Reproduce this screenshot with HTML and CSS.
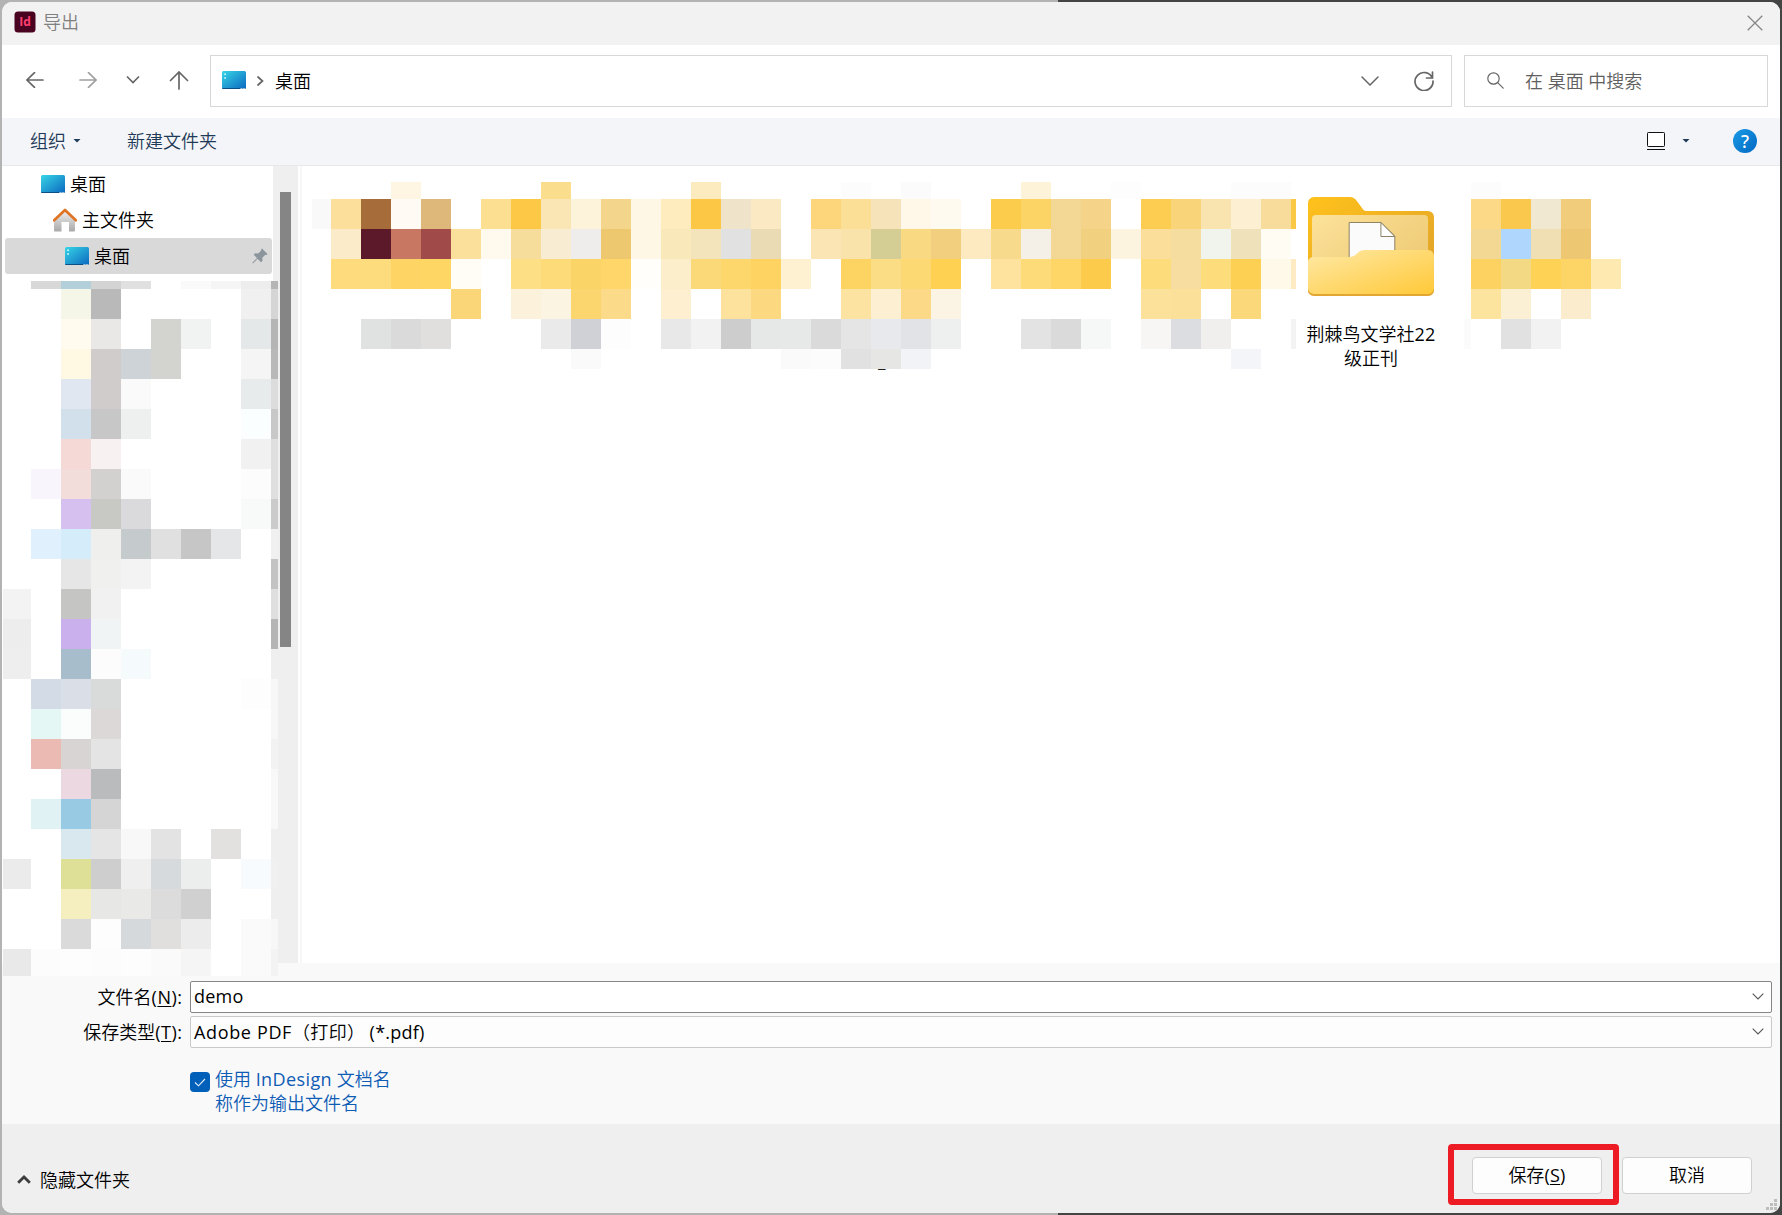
FILE: index.html
```html
<!DOCTYPE html>
<html lang="zh-CN">
<head>
<meta charset="utf-8">
<title>导出</title>
<link rel="stylesheet" href="styles.css">
</head>
<body>
<svg width="0" height="0" class="defs" aria-hidden="true">
  <defs>
    <linearGradient id="desk" x1="0" y1="0" x2="1" y2="1"><stop offset="0" stop-color="#37d5e6"/><stop offset="1" stop-color="#0b68c0"/></linearGradient>
    <symbol id="desktop" viewBox="0 0 24 18">
      <rect width="24" height="18" rx="1.5" fill="url(#desk)"/>
      <path d="M0 17h24a1.400 1.400 0 0 1-1.400 1H1.400A1.400 1.400 0 0 1 0 17z" fill="#0a4f86"/>
      <path d="M18.500 17.500h1.200M20.500 17.500h1.200M22.300 17.500h1" stroke="#d5efff" stroke-width="1"/>
    </symbol>
    <symbol id="desktop-dots" viewBox="0 0 24 18">
      <use href="#desktop" width="24" height="18"/>
      <path d="M2.200 3.200h1.800M2.200 7h1.800" stroke="#c9fafd" stroke-width="1.600"/>
    </symbol>
  </defs>
</svg>
<div class="window">
  <header class="titlebar">
    <svg class="app-icon" width="22" height="22" viewBox="0 0 22 22"><rect x=".5" y=".5" width="21" height="21" rx="3.500" fill="#49021f"/><text x="11" y="14.500" text-anchor="middle">Id</text></svg>
    <span class="title">导出</span>
    <svg class="close" width="16" height="16" viewBox="0 0 16 16"><path d="M.7.7l14.600 14.600M15.300.7L.7 15.300" stroke="#868686" stroke-width="1.300"/></svg>
  </header>

  <nav class="nav">
    <svg class="back" width="18" height="16" viewBox="0 0 18 16"><path d="M17 8H1M8.500.7L1 8l7.500 7.300"/></svg>
    <svg class="forward" width="18" height="16" viewBox="0 0 18 16"><path d="M1 8h16M9.500.7L17 8l-7.500 7.300"/></svg>
    <svg class="recent" width="14" height="8" viewBox="0 0 14 8"><path d="M1.500 1l5.500 5.500L12.500 1"/></svg>
    <svg class="up" width="20" height="19" viewBox="0 0 20 19"><path d="M10 18V1M1.500 9.500L10 1l8.500 8.500"/></svg>
    <div class="address">
      <svg width="24" height="18"><use href="#desktop-dots"/></svg>
      <svg class="crumb" width="7" height="10" viewBox="0 0 7 10"><path d="M1 1l4.500 4L1 9"/></svg>
      <span>桌面</span>
      <svg class="history" width="18" height="10" viewBox="0 0 18 10"><path d="M1 1l8 8 8-8"/></svg>
      <svg class="refresh" width="20" height="20" viewBox="0 0 20 20"><path d="M18.300 7A9 9 0 1 0 19 10M18.500 1v6h-6"/></svg>
    </div>
    <div class="search">
      <svg width="17" height="17" viewBox="0 0 17 17"><circle cx="6.500" cy="6.500" r="5.700"/><path d="M10.700 10.700l5.500 5.500"/></svg>
      <span>在 桌面 中搜索</span>
    </div>
  </nav>

  <div class="toolbar">
    <span>组织</span><i class="tri"></i>
    <span class="new-folder">新建文件夹</span>
    <svg class="view" width="18" height="18" viewBox="0 0 18 18"><rect x=".5" y=".5" width="17" height="14" rx=".8" fill="#fff" stroke="#111"/><path d="M0 17.500h18" stroke="#111"/></svg>
    <i class="tri tri-view"></i>
    <span class="help">?</span>
  </div>

  <main class="body">
    <aside class="tree">
      <div class="node"><svg width="24" height="18"><use href="#desktop"/></svg>桌面</div>
      <div class="node home">
        <svg width="24" height="24" viewBox="0 0 24 24">
          <defs><linearGradient id="wall" x1="0" y1="0" x2="0" y2="1"><stop offset="0" stop-color="#eee"/><stop offset="1" stop-color="#a9a9a9"/></linearGradient></defs>
          <path d="M12 3l10 9v10.500a1 1 0 0 1-1 1h-5V14H8.500v9.500H2a1 1 0 0 1-1-1V12z" fill="url(#wall)"/>
          <path d="M1.200 12.300L12 2l10.800 10.300" fill="none" stroke="#df7424" stroke-width="2.700" stroke-linecap="round" stroke-linejoin="round"/>
        </svg>主文件夹</div>
      <div class="node selected"><svg width="24" height="18"><use href="#desktop-dots"/></svg>桌面
        <svg class="pin" width="16" height="16" viewBox="0 0 16 16"><path d="M10 .5L15.500 6l-1 1-1.200-.2-3 3 .2 3-1.500 1.500-3.500-3.500L1 15.500l-.7-.7L5 10 1.700 6.700l1.500-1.500 3 .3 3-3L9 1.500z" fill="#8a959c"/></svg>
      </div>
    </aside>
    <div class="scrollbar"><div class="thumb"></div></div>
    <div class="splitter"></div>
    <section class="files">
      <svg class="mosaic" id="files-a" width="984" height="187"></svg>
      <figure class="folder">
        <svg width="126" height="99" viewBox="0 0 127 99" preserveAspectRatio="none">
          <defs>
            <linearGradient id="fb" x1="0" y1="0" x2="1" y2="1"><stop offset="0" stop-color="#ffc21b"/><stop offset="1" stop-color="#dfa12a"/></linearGradient>
            <linearGradient id="fi" x1="0" y1="0" x2="1" y2=".6"><stop offset="0" stop-color="#fce29a"/><stop offset="1" stop-color="#efcc78"/></linearGradient>
            <linearGradient id="ff" x1="0" y1="0" x2="1" y2="1"><stop offset="0" stop-color="#ffe9a6"/><stop offset="1" stop-color="#ffc938"/></linearGradient>
          </defs>
          <path d="M6 0h35c5 0 7 2 9 5l6 8q1 1 3 1h62a6 6 0 0 1 6 6v60H0V6a6 6 0 0 1 6-6z" fill="url(#fb)"/>
          <path d="M8 18h109a4 4 0 0 1 4 4v50H4V22a4 4 0 0 1 4-4z" fill="url(#fi)"/>
          <path d="M41.500 70V25.500h32L87.500 39v25z" fill="#fbfbfb" stroke="#8c8264"/>
          <path d="M73.500 25.500V39.500h14z" fill="#fff" stroke="#8c8264"/>
          <path d="M0 66v26a6 6 0 0 0 6 7h115a6 6 0 0 0 6-7V60z" fill="#e2a733"/>
          <path d="M5 60h36c4 0 6-1 9-4 2-2 4-3 8-3h63a6 6 0 0 1 6 6v32a6 6 0 0 1-6 6H6a6 6 0 0 1-6-6V65a5 5 0 0 1 5-5z" fill="url(#ff)"/>
        </svg>
        <figcaption>荆棘鸟文学社<span class="latin">22</span><br>级正刊</figcaption>
      </figure>
      <svg class="mosaic" id="files-b" width="157" height="187"></svg>
      <span class="label-end">_</span>
    </section>
    <svg class="mosaic tree-mosaic" id="tree-mosaic" width="275" height="695"></svg>
  </main>

  <section class="form">
    <div class="field"><label>文件名<span class="latin">(<u>N</u>):</span></label><div class="combo active"><span class="latin">demo</span><svg width="12" height="7" viewBox="0 0 12 7"><path d="M.7.7L6 6l5.300-5.300"/></svg></div></div>
    <div class="field"><label>保存类型<span class="latin">(<u>T</u>):</span></label><div class="combo"><span><span class="latin format">Adobe PDF</span><span class="paren">（打印） </span><span class="latin">(*.pdf)</span></span><svg width="12" height="7" viewBox="0 0 12 7"><path d="M.7.7L6 6l5.300-5.300"/></svg></div></div>
    <div class="option">
      <svg width="20" height="20" viewBox="0 0 20 20"><rect width="20" height="20" rx="4" fill="#005fb8"/><path d="M5 10.500l3.500 3.300L15 7" fill="none" stroke="#e8f2fb" stroke-width="1.100"/></svg>
      <p>使用 <span class="latin product">InDesign</span> 文档名<br>称作为输出文件名</p>
    </div>
  </section>

  <footer class="footer">
    <svg class="hide" width="14" height="9" viewBox="0 0 14 9"><path d="M1.200 7.800L7 2l5.800 5.800" fill="none" stroke="#3c3c3c" stroke-width="2.800"/></svg>
    <span class="hide-text">隐藏文件夹</span>
    <div class="highlight"><button>保存<span class="latin">(<u>S</u>)</span></button></div>
    <button class="cancel">取消</button>
    <svg class="grip" width="12" height="12" viewBox="0 0 12 12"><path d="M8 0h3v3H8zM4 4h3v3H4zM8 4h3v3H8zM0 8h3v3H0zM4 8h3v3H4zM8 8h3v3H8z" fill="#bdbdbd"/></svg>
  </footer>
</div>
<script src="mosaic.js"></script>
</body>
</html>
```
FILE: styles.css
```css
* { box-sizing: border-box; }
body {
  margin: 0; padding: 2px; width: 1782px; height: 1215px; overflow: hidden;
  background: linear-gradient(90deg, #b3b3b3 1058px, #444 1058px);
  font: 350 18px/24px "Noto Sans", "Noto Sans CJK SC", sans-serif; color: #000;
}
svg { display: block; flex: none; }
.defs { position: absolute; }
.latin { font-family: "Open Sans", sans-serif; font-weight: 400; letter-spacing: .25px; }
.format { letter-spacing: .65px; }
.product { letter-spacing: .4px; }
.window { width: 1778px; height: 1211px; border-radius: 10px; overflow: hidden; background: #fff; display: flex; flex-direction: column; }

.titlebar { height: 43px; background: #f2f2f2; display: flex; align-items: center; padding: 0 17px 0 12px; flex: none; }
.app-icon { margin-top: -3px; }
.app-icon text { font: bold 12px "Open Sans", sans-serif; fill: #ff3f73; }
.title { margin: -4px 0 0 7px; color: #808080; }
.close { margin-left: auto; margin-top: -2px; }

.nav { height: 73px; flex: none; display: flex; align-items: center; padding: 0 12px 2px 24px; }
.nav svg path, .nav svg circle { stroke-linecap: round; }
.nav > svg, .crumb, .history, .refresh, .search svg { fill: none; stroke: #666; stroke-width: 1.700; }
.back, .forward, .recent { margin-top: -1px; }
.nav .forward { margin-left: 35px; stroke: #a0a0a0; }
.recent { margin-left: 29px; }
.up { margin-left: 29px; }
.address { margin-left: 21px; width: 1242px; height: 52px; border: 1px solid #d8d8d8; display: flex; align-items: center; padding: 0 17px 0 11px; }
.address span { margin-left: 11px; }
.address > svg:first-child { margin-top: -2px; }
.crumb { margin-left: 11px; }
.history { margin-left: auto; stroke-width: 1.500; }
.refresh { margin-left: 35px; }
.search { margin-left: 12px; width: 304px; height: 52px; border: 1px solid #d8d8d8; display: flex; align-items: center; padding-left: 22px; color: #606060; }
.search svg { stroke-width: 1.200; }
.search span { margin-left: 21px; }

.toolbar { height: 48px; flex: none; background: #f3f5f8; border-bottom: 1px solid #e6e8ea; display: flex; align-items: center; padding: 0 23px 2px 28px; color: #1f3a57; }
.tri { width: 8px; height: 4px; margin-left: 7px; background: #1f3a57; clip-path: polygon(0 0, 100% 0, 50% 100%); }
.new-folder { margin-left: 46px; }
.view { margin-left: auto; }
.tri-view { margin-left: 17px; }
.help { margin-left: 43px; width: 24px; height: 24px; border-radius: 50%; background: linear-gradient(135deg, #1c9be6, #0068c2); color: #fff; font-size: 18px; font-weight: 500; line-height: 24px; text-align: center; }

.body { height: 797px; flex: none; display: flex; position: relative; }
.tree { width: 271px; flex: none; }
.node { height: 36px; padding-left: 39px; display: flex; align-items: center; gap: 5px; }
.home { padding-left: 51px; }
.selected { margin: 0 1px 0 3px; padding: 0 4px 0 60px; background: #d9d9d9; border-radius: 3px; }
.pin { margin-left: auto; }
.scrollbar { width: 25px; background: #efefef; padding: 26px 0 0 7px; flex: none; }
.thumb { width: 11px; height: 455px; background: #858585; }
.splitter { width: 4px; flex: none; border-right: 2px solid #f7f7f7; }
.files { flex: 1; display: flex; align-items: flex-start; padding: 16px 0 0 10px; position: relative; }
.folder { margin: 15px 0 0; width: 168px; display: flex; flex-direction: column; align-items: center; padding-right: 18px; }
.folder figcaption { margin-top: 26px; text-align: center; white-space: nowrap; }
.label-end { position: absolute; left: 576px; top: 184px; line-height: 20px; }
.tree-mosaic { position: absolute; left: 1px; top: 115px; background: #fff; }

.form { height: 161px; flex: none; background: #f9f9f9; padding: 18px 8px 0 0; }
.field { display: flex; align-items: center; margin-bottom: 3px; }
.field label { width: 180px; text-align: right; white-space: nowrap; margin-right: 8px; }
.field label .latin { letter-spacing: .5px; margin-right: -.5px; }
u { text-decoration-thickness: 1px; text-underline-offset: 2px; }
.combo { flex: 1; height: 32px; border: 1px solid #c9c9c9; border-radius: 2px; background: #fdfdfd; display: flex; align-items: center; justify-content: space-between; padding: 0 7px 2px 3px; }
.combo.active { border-color: #868686; background: #fff; }
.combo svg { fill: none; stroke: #555; stroke-width: 1.100; }
.paren { font-family: "Noto Sans CJK SC", sans-serif; letter-spacing: .3px; }
.option { display: flex; margin: 19px 0 0 188px; gap: 5px; color: #0f5cb5; }
.option svg { margin-top: 5px; }
.option p { margin: 0; }

.footer { flex: 1; background: #efefef; position: relative; display: flex; padding: 20px 28px 0 15px; }
.hide { margin-top: 31px; }
.hide-text { margin: 24px 0 0 9px; }
.highlight { margin-left: auto; width: 171px; height: 61px; border: 6px solid #ed1c24; border-radius: 4px; padding: 7px 0 0 18px; }
button { display: block; width: 130px; height: 37px; padding: 0 0 1px; border: 1px solid #d0d0d0; border-radius: 4px; background: #fdfdfd; font: inherit; color: #000; }
.cancel { margin: 13px 0 0 3px; }
.grip { position: absolute; right: 2px; bottom: 2px; }
```
FILE: mosaic.js
```js
// Draws blocks of 30px tiles. Each row lists "column:colour" pairs.
function draw(id, firstX, rowEdges, colX, rows) {
  const svg = document.getElementById(id);
  rows.forEach((row, r) => {
    row.split(" ").filter(Boolean).forEach(pair => {
      const [c, color] = pair.split(":");
      const x0 = Math.max(0, colX + 30 * c - firstX);
      const x1 = colX + 30 * (+c + 1) - firstX;
      const rect = document.createElementNS("http://www.w3.org/2000/svg", "rect");
      rect.setAttribute("x", x0);
      rect.setAttribute("y", rowEdges[r]);
      rect.setAttribute("width", x1 - x0);
      rect.setAttribute("height", rowEdges[r + 1] - rowEdges[r]);
      rect.setAttribute("fill", "#" + color);
      svg.appendChild(rect);
    });
  });
}

const fileEdges = [0, 17, 47, 77, 107, 137, 167, 187];
draw("files-a", 312, fileEdges, 331, [
  "2:fff5e3 7:fbdd8e 12:fdebc0 17:fcfcfc 19:fbfbfb 23:fdf3d8 26:fdfdfd 30:fcfcfc 31:fcfcfc",
  "-1:f9f9f9 0:fcdf9a 1:a66c3a 2:fffbf4 3:deb87a 5:fcdf90 6:fdc846 7:fae6b4 8:fdf3db 9:f3d58b 10:fff7e6 11:feebbe 12:fbc745 13:efe4c9 14:fae9c3 16:fdd67c 17:fbdf97 18:f6e3b9 19:fff7e8 20:fffaf0 22:fccc4c 23:fcd465 24:f2d894 25:f5d388 27:fccd50 28:f9d479 29:f9e3af 30:fdefd2 31:f8dc9b 32:fac844",
  "0:fbebc8 1:5b192a 2:c87762 3:a04b49 4:fae09a 5:fff9ee 6:f7dd9b 7:f8edd3 8:efedeb 9:edc86e 10:fff7e6 11:f9e8ba 12:f3e4bc 13:e1e1e1 14:eadbb5 16:fbe5b4 17:f9e3ab 18:d4cd94 19:fad983 20:f2cf7e 21:fdeac0 22:f8da8d 23:f4f0e7 24:f2d894 25:f1d080 26:fdf4e0 27:fade99 28:f5dd9f 29:f1f4ec 30:efe1ba 31:fffcf4",
  "0:fedc7e 1:fddc7e 2:fed564 3:fdd664 4:fffdf5 6:fddf86 7:fcdb78 8:fbd468 9:fed669 10:fffefb 11:fdeecb 12:fcd978 13:fdd76c 14:fed361 15:fdf1d2 17:fdd462 18:fbdd85 19:fdd973 20:ffd153 22:fde39e 23:fddb78 24:fed668 25:fccb4c 27:fddc7c 28:f8dda0 29:fddc7c 30:fdd053 31:fff9ea 32:feebc4",
  "4:fad678 6:fcf1da 7:fbf4e3 8:fbd56e 9:fbdb8a 11:fdefcf 13:fce29c 14:fcd980 17:fce3a1 18:fcefd2 19:fbd986 20:fbf4e4 27:fce19b 28:fbe09a 30:fbd87a",
  "1:dfe2e1 2:dadada 3:e0dfdd 7:eaeaea 8:d0d1d6 9:fdfdfd 11:e8e8e8 12:f2f2f2 13:cdcdcd 14:e5e8e7 15:e6e9e8 16:dadada 17:e5e5e5 18:e8e9ed 19:e2e3e6 20:eef0f0 23:e3e3e3 24:dadada 25:f6f8f8 27:f7f6f5 28:dbdde1 29:f0efed 32:f3f3f3",
  "8:fafafa 15:fafafa 16:fcfcfc 17:e1e1e1 18:e6e6e4 19:f2f3f6 30:f3f5f8"
]);
draw("files-b", 1464, fileEdges, 1471, [
  "0:fcfcfc",
  "0:fcd987 1:fac84c 2:f0e8d1 3:f1cd7b",
  "0:f2d892 1:afd6fc 2:f1dfb4 3:edc771",
  "0:fdd261 1:f4d985 2:fed255 3:fdd566 4:fee9b0",
  "0:fce49f 1:fbefd4 3:faeccc",
  "-1:fbfbfb 1:e1e1e1 2:f2f2f2",
  ""
]);

const treeEdges = [0];
for (let y = 8; y < 695; y += 30) treeEdges.push(y);
treeEdges.push(695);
draw("tree-mosaic", 3, treeEdges, 1, [
  "1:d8d8d8 2:b3d0da 3:d3d3d3 4:e0e0e0 6:fafafa 7:f5f5f5 8:ededed 9:b5b5b5",
  "2:f6f6e8 3:b9b9b9 8:f0f0f0 9:d5d5d5",
  "2:fffbef 3:eae8e6 5:d3d3cf 6:f1f3f3 8:e4e8e9 9:b5b5b5",
  "2:fff8e3 3:cfcccb 4:ced3d7 5:d3d3cf 8:f5f5f5 9:b8b8b8",
  "2:e0e7f0 3:cfcccb 4:fafafa 8:e8ebeb 9:dcdcdc",
  "2:d1e0eb 3:c6c7c6 4:eef0f0 8:fbfefe 9:c8c8c8",
  "2:f5d9d6 3:f8f1f1 8:f1f1f1 9:dfdfdf",
  "1:f8f5fc 2:f2dddb 3:d3d1cf 4:fafafa 8:fcfcfc 9:dfdfdf",
  "2:d6c0f0 3:c8c8c5 4:dadadc 8:f8fafa 9:cbcbcb",
  "1:e0f1fd 2:d5ecfb 3:efefee 4:c5cacd 5:e0e0e0 6:c6c6c6 7:e5e6e8 9:f0f0f0",
  "2:e6e6e6 3:f0f0ef 4:f3f3f3 9:c3c3c3",
  "0:f3f3f3 2:c5c5c3 3:f1f1f1 9:dfdfdf",
  "0:ededed 2:cab0ec 3:f1f4f4 9:b5b5b5",
  "0:eeeeee 2:a8bdcc 3:fcfcfc 4:f5fafc 9:efefef",
  "1:d3dbe7 2:d9dee7 3:d9dbda 8:fdfdfd 9:f7f7f7",
  "1:e4f7f4 2:fafdfc 3:dcd8d7 9:f7f7f7",
  "1:ebbab3 2:d7d4d3 3:e4e4e4 9:f2f2f2",
  "2:ecd8e0 3:babbbc 9:f8f8f8",
  "1:e0f2f4 2:98cae3 3:d5d5d5 9:f8f8f8",
  "2:d9e7ef 3:e5e5e5 4:f8f8f8 5:e3e3e3 7:e3e1df 9:efefef",
  "0:ebebeb 2:dee098 3:cececf 4:efefef 5:d6dadc 6:eceeee 8:f8fbfe 9:f0f0f0",
  "2:f5efc0 3:e7e7e5 4:e9e9e8 5:dcdcdc 6:d0d0d0 9:efefef",
  "2:dadada 3:fdfdfd 4:d6d9db 5:e1dfdd 6:ececec 8:fafafa 9:f7f7f7",
  "0:e9e9e9 1:fcfcfc 2:fdfdfd 3:fcfcfc 4:fdfdfd 5:fafafa 6:f5f5f5 8:fafafa 9:f3f3f3"
]);
```
